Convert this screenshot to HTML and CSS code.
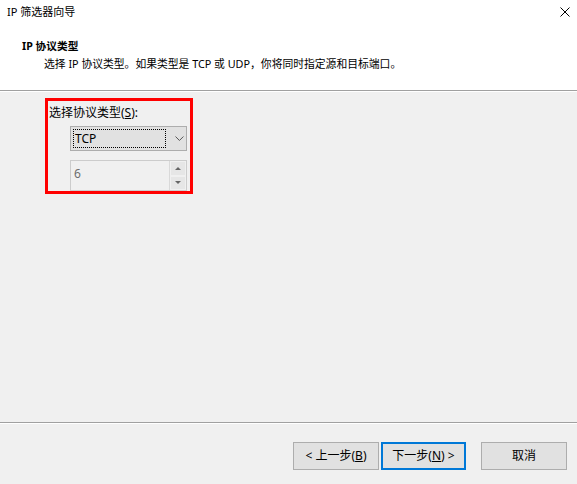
FILE: index.html
```html
<!DOCTYPE html>
<html lang="zh-CN">
<head>
<meta charset="utf-8">
<title>IP 筛选器向导</title>
<link rel="stylesheet" href="styles.css">
</head>
<body>
<div class="window">
  <div class="top">
    <div class="titlebar">
      <span class="title">IP 筛选器向导</span>
      <svg class="close" width="10" height="10" viewBox="0 0 10 10"><path d="M0.5 0.5L9.5 9.5M9.5 0.5L0.5 9.5" stroke="#000" stroke-width="1" fill="none"/></svg>
    </div>
    <div class="head-title">IP 协议类型</div>
    <div class="head-sub">选择 IP 协议类型。如果类型是 TCP 或 UDP，你将同时指定源和目标端口。</div>
  </div>
  <div class="main">
    <div class="highlight">
      <div class="label">选择协议类型(<u>S</u>):</div>
      <div class="combo">
        <div class="combo-focus">TCP</div>
        <svg class="chev" width="9" height="5" viewBox="0 0 9 5"><path d="M0.5 0.5L4.5 4.5L8.5 0.5" stroke="#555" stroke-width="1" fill="none"/></svg>
      </div>
      <div class="spin">
        <div class="spin-val">6</div>
        <div class="spin-btns">
          <div class="spin-btn"><span class="tri-up"></span></div>
          <div class="spin-btn"><span class="tri-down"></span></div>
        </div>
      </div>
    </div>
  </div>
  <div class="footer">
    <button class="btn">&lt; 上一步(<u>B</u>)</button>
    <button class="btn btn-default">下一步(<u>N</u>) &gt;</button>
    <button class="btn btn-cancel">取消</button>
  </div>
</div>
</body>
</html>
```

FILE: styles.css
```css
* { box-sizing: border-box; }
html, body {
  margin: 0;
  padding: 0;
}
body {
  width: 577px;
  height: 484px;
  overflow: hidden;
  background: #f0f0f0;
  font-family: "Noto Sans", "Noto Sans CJK SC", sans-serif;
  font-size: 12px;
  color: #000;
}
.window {
  display: flex;
  flex-direction: column;
  height: 484px;
}
.top {
  background: #fff;
  height: 91px;
  border-bottom: 1px solid #a0a0a0;
  box-shadow: 0 1px 0 #fff;
}
.titlebar {
  height: 24px;
  display: flex;
  align-items: center;
  justify-content: space-between;
  padding: 0 7px 0 7px;
}
.title {
  line-height: 24px;
  font-size: 11px;
}
.close {
  display: block;
}
.head-title {
  margin-top: 14px;
  padding-left: 22px;
  font-weight: bold;
  font-size: 10.7px;
  line-height: 17px;
  height: 17px;
}
.head-sub {
  padding-left: 44px;
  font-size: 10.8px;
  line-height: 17px;
  height: 17px;
}
.main {
  flex: 1;
  padding: 7px 0 0 45px;
  border-bottom: 1px solid #a0a0a0;
  box-shadow: 0 1px 0 #fff;
}
.highlight {
  width: 148px;
  height: 96px;
  border: 3px solid #ff0000;
  padding: 3px 0 0 1px;
}
.label {
  line-height: 18px;
  height: 18px;
}
.label u { text-decoration: underline; }
.combo {
  margin: 4px 0 0 21px;
  width: 117px;
  height: 25px;
  background: #e1e1e1;
  border: 1px solid #adadad;
  display: flex;
  align-items: center;
  padding: 0 2px;
}
.combo-focus {
  width: 94px;
  height: 19px;
  border: 1px dotted #000;
  font-size: 12px;
  line-height: 17px;
  padding-left: 1px;
}
.chev {
  display: block;
  margin-left: 9px;
}
.spin {
  margin: 9px 0 0 21px;
  width: 117px;
  height: 31px;
  border: 1px solid #cccccc;
  background: #f0f0f0;
  display: flex;
}
.spin-val {
  flex: 1;
  color: #6d6d6d;
  font-size: 12px;
  line-height: 26px;
  padding-left: 3px;
}
.spin-btns {
  width: 17px;
  display: flex;
  flex-direction: column;
  border-left: 1px solid #d9d9d9;
}
.spin-btn {
  flex: 1;
  display: flex;
  align-items: center;
  justify-content: center;
  background: #e6e6e6;
  border: 1px solid #f0f0f0;
}
.tri-up {
  width: 0; height: 0;
  border-left: 3px solid transparent;
  border-right: 3px solid transparent;
  border-bottom: 3px solid #666;
}
.tri-down {
  width: 0; height: 0;
  border-left: 3px solid transparent;
  border-right: 3px solid transparent;
  border-top: 3px solid #666;
}
.footer {
  height: 61px;
  display: flex;
  align-items: flex-start;
  padding: 19px 0 0 293px;
}
.btn {
  font-family: "Noto Sans", "Noto Sans CJK SC", sans-serif;
  font-size: 12px;
  color: #000;
  width: 86px;
  height: 28px;
  background: #e1e1e1;
  border: 1px solid #adadad;
  padding: 0;
  line-height: 24px;
  margin: 0;
}
.btn-default {
  margin-left: 2px;
  width: 85px;
  border: 2px solid #0078d7;
}
.btn-cancel {
  margin-left: 15px;
}
.btn u { text-decoration: underline; }
```
